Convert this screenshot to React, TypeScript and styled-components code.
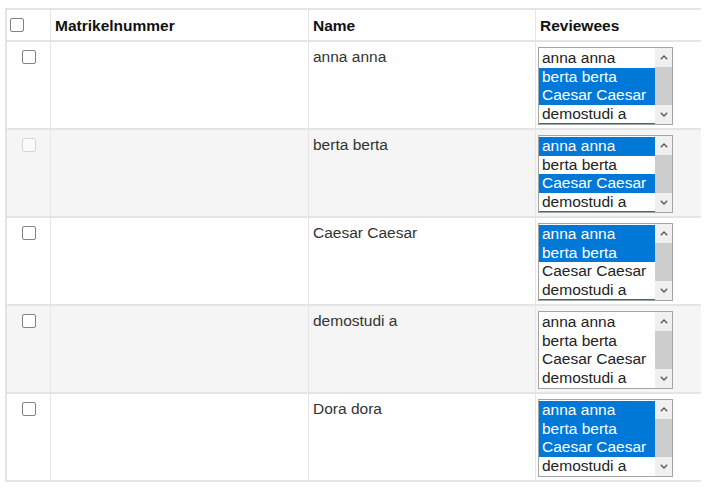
import styled, { createGlobalStyle } from 'styled-components';

const GlobalStyle = createGlobalStyle`
  body {
    margin: 0;
    background: #fff;
    font-family: "Liberation Sans", Arial, sans-serif;
  }
`;

const students = ['anna anna', 'berta berta', 'Caesar Caesar', 'demostudi a', 'Dora dora'];
const VISIBLE = 4;

// which reviewees are picked for each student (by index into students)
const rows = [
  { name: 'anna anna', picked: [1, 2, 4], disabled: false },
  { name: 'berta berta', picked: [0, 2, 4], disabled: true },
  { name: 'Caesar Caesar', picked: [0, 1, 4], disabled: false },
  { name: 'demostudi a', picked: [], disabled: false },
  { name: 'Dora dora', picked: [0, 1, 2], disabled: false },
];

const Page = styled.div`
  padding: 8px 11px 0 5px;
`;

const Table = styled.div`
  border-top: 2px solid #e4e4e4;
  border-left: 2px solid #e4e4e4;
`;

const Row = styled.div<{ $striped?: boolean; $head?: boolean }>`
  display: grid;
  grid-template-columns: 43px 258px 227px 1fr;
  height: ${p => (p.$head ? '30px' : '86px')};
  border-bottom: 2px solid #e4e4e4;
  background: ${p => (p.$striped ? '#f5f5f5' : '#fff')};
`;

const Cell = styled.div<{ $first?: boolean }>`
  box-sizing: border-box;
  border-left: ${p => (p.$first ? 'none' : '1px solid #e6e6e6')};
  padding: 6px 4px 0;
  font-size: 15.5px;
  line-height: 17px;
  color: #333;
`;

const HeadCell = styled(Cell)`
  display: flex;
  align-items: center;
  padding: 0 4px;
  font-weight: bold;
  color: #111;
`;

const CheckCell = styled(Cell)`
  display: flex;
  justify-content: center;
  padding-top: 8px;
`;

const HeadCheckCell = styled(Cell)`
  display: flex;
  align-items: center;
  padding: 0 0 0 3px;
`;

const Check = styled.span<{ $disabled?: boolean }>`
  box-sizing: border-box;
  display: block;
  width: 14px;
  height: 14px;
  border: 1.5px solid ${p => (p.$disabled ? '#d6d6d6' : '#828282')};
  border-radius: 2px;
  background: ${p => (p.$disabled ? '#fafafa' : '#fff')};
`;

const SelectCell = styled(Cell)`
  padding: 5px 0 0 2px;
`;

const ListBox = styled.div`
  box-sizing: border-box;
  display: flex;
  width: 135px;
  height: 78px;
  border: 1px solid #a4a4a4;
  background: #fff;
  overflow: hidden;
`;

const Options = styled.div`
  flex: 1;
  padding-top: 1px;
  overflow: hidden;
`;

const Option = styled.div<{ $selected: boolean }>`
  height: 18.5px;
  line-height: 18.5px;
  padding-left: 3px;
  font-size: 15.5px;
  white-space: nowrap;
  color: ${p => (p.$selected ? '#fff' : '#222')};
  background: ${p => (p.$selected ? '#0078d7' : 'transparent')};
`;

// top edge of the next option, scrolled out of view
const Peek = styled.div<{ $selected: boolean }>`
  height: 2px;
  background: ${p => (p.$selected ? '#0078d7' : 'transparent')};
`;

const ScrollBar = styled.div`
  width: 17px;
  display: flex;
  flex-direction: column;
  background: #f0f0f0;
`;

const ScrollButton = styled.div`
  height: 19px;
  display: flex;
  align-items: center;
  justify-content: center;
`;

const Thumb = styled.div`
  flex: 1;
  background: #cdcdcd;
`;

const Chevron = ({ up }: { up?: boolean }) => (
  <svg width="8" height="5" viewBox="0 0 8 5">
    <polyline
      points={up ? '0.8,4.2 4,1 7.2,4.2' : '0.8,0.8 4,4 7.2,0.8'}
      fill="none"
      stroke="#5a5a5a"
      strokeWidth="1.4"
    />
  </svg>
);

const Reviewees = ({ picked }: { picked: number[] }) => (
  <ListBox>
    <Options>
      {students.slice(0, VISIBLE).map((s, i) => (
        <Option key={s} $selected={picked.includes(i)}>{s}</Option>
      ))}
      <Peek $selected={picked.includes(VISIBLE)} />
    </Options>
    <ScrollBar>
      <ScrollButton><Chevron up /></ScrollButton>
      <Thumb />
      <ScrollButton><Chevron /></ScrollButton>
    </ScrollBar>
  </ListBox>
);

export default function App() {
  return (
    <Page>
      <GlobalStyle />
      <Table>
        <Row $head>
          <HeadCheckCell $first><Check /></HeadCheckCell>
          <HeadCell>Matrikelnummer</HeadCell>
          <HeadCell>Name</HeadCell>
          <HeadCell>Reviewees</HeadCell>
        </Row>
        {rows.map((r, i) => (
          <Row key={r.name} $striped={i % 2 === 1}>
            <CheckCell $first><Check $disabled={r.disabled} /></CheckCell>
            <Cell />
            <Cell>{r.name}</Cell>
            <SelectCell>
              <Reviewees picked={r.picked} />
            </SelectCell>
          </Row>
        ))}
      </Table>
    </Page>
  );
}
